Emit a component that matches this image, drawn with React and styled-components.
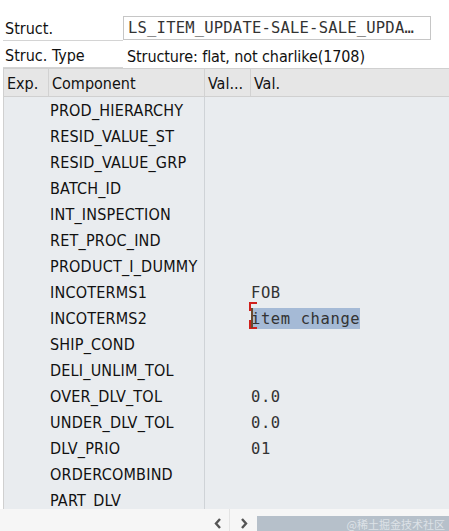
import React from 'react'
import styled, { createGlobalStyle } from 'styled-components'

const Global = createGlobalStyle`
  html, body { margin: 0; padding: 0; background: #fff; }
  body { font-family: "DejaVu Sans Condensed", "Liberation Sans", Arial, sans-serif; }
`

const Page = styled.div`
  width: 449px; height: 531px; overflow: hidden;
  padding-top: 16px; box-sizing: border-box;
  display: flex; flex-direction: column;
`

const FieldRow = styled.div`
  display: flex; align-items: stretch;
  height: ${p => p.$h}px;
`
const Label = styled.div`
  width: 120px; margin-left: 3px; padding-left: 2px; box-sizing: border-box;
  border-bottom: 1px solid #d4d4d4;
  display: flex; align-items: flex-end; padding-bottom: 2px;
  font-size: 16px; color: #111;
`
const InputBox = styled.div`
  width: 308px; height: 24px; box-sizing: border-box;
  border: 1px solid #c6c6c6; background: #fff;
  font-family: "DejaVu Sans Mono", "Liberation Mono", monospace;
  font-size: 15.5px; color: #333; letter-spacing: 0.2px;
  padding: 0 0 0 4px; line-height: 22px; white-space: nowrap; overflow: hidden;
`
const PlainValue = styled.div`
  padding-left: 4px; display: flex; align-items: flex-end; padding-bottom: 2px;
  font-size: 16px; color: #111; letter-spacing: -0.1px;
`

const Table = styled.div`
  margin-left: 3px; flex: 1;
  border-top: 1px solid #d0d0d0; border-left: 1px solid #d0d0d0;
  display: flex; flex-direction: column;
`
const Header = styled.div`
  display: grid; grid-template-columns: 45px 156px 46px 1fr;
  height: 28px; box-sizing: border-box;
  background: #e6e6e6; border-bottom: 1px solid #d0d0d0;
`
const HeadCell = styled.div`
  padding-left: 3px; font-size: 16px; color: #111;
  display: flex; align-items: center; padding-top: 1px;
  border-right: ${p => p.$last ? 'none' : '1px solid #d2d2d2'};
`
const Body = styled.div`
  height: 412px; overflow: hidden; background: #e9ecef;
  display: grid; grid-template-columns: 45px 156px 1fr;
  grid-auto-rows: 26px;
`
const Cell = styled.div`
  display: flex; align-items: center; position: relative;
  font-size: 16px; color: #111; letter-spacing: 0.2px;
  border-right: ${p => p.$divider ? '1px solid #cfd3d7' : 'none'};
  padding-left: ${p => p.$pad || 0}px;
`
const Mono = styled.span`
  font-family: "DejaVu Sans Mono", "Liberation Mono", monospace;
  font-size: 15.5px; color: #333; letter-spacing: 0.6px;
  line-height: 20px; padding-top: 1px;
  background: ${p => p.$sel ? '#a5bad6' : 'transparent'};
`
const Caret = styled.span`
  position: absolute; left: 46px; top: 3px; width: 2px; height: 20px; background: #6b4a2e;
`
const Bracket = styled.span`
  position: absolute; left: 44px; width: 8px; height: 9px;
  border-left: 2px solid #d0201c;
  ${p => p.$top ? 'top: -3px; border-top: 2px solid #d0201c;' : 'top: 15px; border-bottom: 2px solid #d0201c;'}
  box-sizing: border-box;
`

const Footer = styled.div`
  height: 22px; background: #f6f6f6;
  display: flex; align-items: stretch;
  padding-left: 206px;
`
const Arrow = styled.div`
  width: ${p => p.$w}px; display: flex; align-items: center; justify-content: center;
  border-right: ${p => p.$sep ? '1px solid #e4e4e4' : 'none'};
  padding-top: 6px;
`
const Thumb = styled.div`
  flex: 1; margin-top: 7px; background: #b6c0ca;
  display: flex; align-items: center; justify-content: flex-end;
  padding-right: 4px;
  font-family: "Noto Sans CJK SC", sans-serif; font-size: 11px; color: #dde2e7;
`

const Chevron = ({ dir }) => (
  <svg width="8" height="11" viewBox="0 0 8 11">
    <polyline
      points={dir === 'left' ? '6,1 2,5.5 6,10' : '2,1 6,5.5 2,10'}
      fill="none" stroke="#555" strokeWidth="2.4"
    />
  </svg>
)

const rows = [
  ['PROD_HIERARCHY'], ['RESID_VALUE_ST'], ['RESID_VALUE_GRP'], ['BATCH_ID'],
  ['INT_INSPECTION'], ['RET_PROC_IND'], ['PRODUCT_I_DUMMY'], ['INCOTERMS1', 'FOB'],
  ['INCOTERMS2', 'item change', true], ['SHIP_COND'], ['DELI_UNLIM_TOL'],
  ['OVER_DLV_TOL', '0.0'], ['UNDER_DLV_TOL', '0.0'], ['DLV_PRIO', '01'],
  ['ORDERCOMBIND'], ['PART_DLV'],
]

export default function App() {
  return (
    <>
      <Global />
      <Page>
        <FieldRow $h={25}>
          <Label>Struct.</Label>
          <InputBox>LS_ITEM_UPDATE-SALE-SALE_UPDA…</InputBox>
        </FieldRow>
        <FieldRow $h={27}>
          <Label>Struc. Type</Label>
          <PlainValue>Structure: flat, not charlike(1708)</PlainValue>
        </FieldRow>
        <Table>
          <Header>
            <HeadCell>Exp.</HeadCell>
            <HeadCell>Component</HeadCell>
            <HeadCell>Val...</HeadCell>
            <HeadCell $last>Val.</HeadCell>
          </Header>
          <Body>
            {rows.map(([name, val, sel]) => (
              <React.Fragment key={name}>
                <Cell />
                <Cell $divider $pad={1}>{name}</Cell>
                <Cell $pad={46}>
                  {sel && <Bracket $top />}
                  {sel && <Bracket />}
                  {val && <Mono $sel={sel}>{val}</Mono>}
                  {sel && <Caret />}
                </Cell>
              </React.Fragment>
            ))}
          </Body>
        </Table>
        <Footer>
          <Arrow $w={23} $sep><Chevron dir="left" /></Arrow>
          <Arrow $w={27}><Chevron dir="right" /></Arrow>
          <Thumb>@稀土掘金技术社区</Thumb>
        </Footer>
      </Page>
    </>
  )
}
